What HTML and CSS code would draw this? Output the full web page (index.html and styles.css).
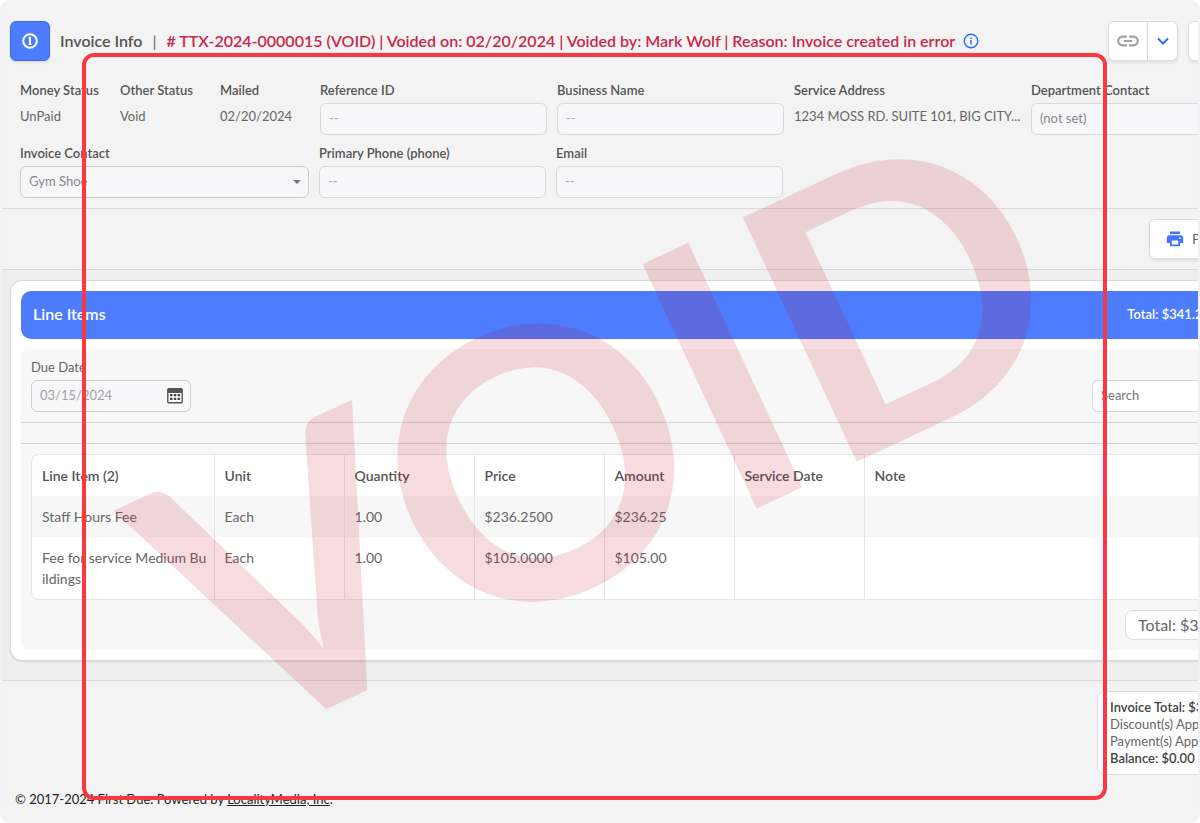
FILE: index.html
```html
<!DOCTYPE html>
<html lang="en">
<head>
  <meta charset="UTF-8" />
  <meta name="viewport" content="width=device-width, initial-scale=1.0"/>
  <title>Invoice Info</title>
  <link rel="stylesheet" href="styles.css">
</head>
<body>

  <div class="page">
    <div class="app">

      <header class="topbar">
        <div class="topbar-icon">
          <svg width="18" height="18" viewBox="0 0 18 18" fill="none" stroke="#fff">
            <circle cx="9" cy="9" r="6.8" stroke-width="2"/>
            <path d="M9 5v8" stroke-width="2"/>
            <path d="M7.400 5.800h2M7.400 12.500h3.200" stroke-width="1"/>
          </svg>
        </div>
        <h1>Invoice Info</h1>
        <span class="divider">|</span>
        <p class="void-info"># TTX-2024-0000015 (VOID) | Voided on: 02/20/2024 | Voided by: Mark Wolf | Reason: Invoice created in error</p>
        <svg class="info" width="16" height="16" viewBox="0 0 16 16" fill="none" stroke="#2f6bff">
          <circle cx="8" cy="8" r="6.8" stroke-width="1.4"/>
          <path d="M8 7v4.4M8 4.4v1.6" stroke-width="1.5"/>
        </svg>
        <div class="topbar-actions">
          <div class="btn-group">
            <button type="button" class="btn btn-link" aria-label="Copy link">
              <svg width="26" height="26" viewBox="0 0 24 24" fill="#a3a3a3">
                <path d="M3.9 12c0-1.71 1.39-3.1 3.1-3.1h4V7H7c-2.76 0-5 2.24-5 5s2.24 5 5 5h4v-1.9H7c-1.71 0-3.1-1.39-3.1-3.1zM8 13h8v-2H8v2zm9-6h-4v1.9h4c1.71 0 3.1 1.39 3.1 3.1s-1.39 3.1-3.1 3.1h-4V17h4c2.76 0 5-2.24 5-5s-2.24-5-5-5z"/>
              </svg>
            </button>
            <button type="button" class="btn btn-caret" aria-label="More link options">
              <svg width="12" height="12" viewBox="0 0 12 12" fill="none" stroke="#2f6bff" stroke-width="2">
                <path d="M1 3.5l5 5 5-5"/>
              </svg>
            </button>
          </div>
          <button type="button" class="btn btn-more" aria-label="More"></button>
        </div>
      </header>

      <section class="details">
        <div class="fields">
          <div class="field small">
            <span class="label">Money Status</span>
            <span class="value">UnPaid</span>
          </div>
          <div class="field small">
            <span class="label">Other Status</span>
            <span class="value">Void</span>
          </div>
          <div class="field small">
            <span class="label">Mailed</span>
            <span class="value">02/20/2024</span>
          </div>
          <div class="field">
            <label for="reference">Reference ID</label>
            <input type="text" id="reference" placeholder="--" />
          </div>
          <div class="field">
            <label for="business">Business Name</label>
            <input type="text" id="business" placeholder="--" />
          </div>
          <div class="field">
            <span class="label">Service Address</span>
            <span class="value">1234 MOSS RD. SUITE 101, BIG CITY...</span>
          </div>
          <div class="field">
            <label for="department">Department Contact</label>
            <input type="text" id="department" value="(not set)" />
          </div>
        </div>

        <div class="fields">
          <div class="field wide">
            <label for="contact">Invoice Contact</label>
            <div class="select">
              <select id="contact">
                <option>Gym Shoe</option>
              </select>
            </div>
          </div>
          <div class="field">
            <label for="phone">Primary Phone (phone)</label>
            <input type="text" id="phone" placeholder="--" />
          </div>
          <div class="field">
            <label for="email">Email</label>
            <input type="text" id="email" placeholder="--" />
          </div>
        </div>
      </section>

      <section class="print-bar">
        <button type="button" class="btn btn-print">
          <svg width="18" height="18" viewBox="0 0 18 18" fill="#3f74ff">
            <rect x="4" y="1.5" width="10" height="2.6"/>
            <path d="M3.5 5.2h11A2.7 2.7 0 0 1 17.200 7.900V13H14v3.200H4V13H.8V7.900A2.700 2.700 0 0 1 3.500 5.200zM5.800 10.500v4h6.400v-4zM13.300 7.300v1.500h1.500V7.300z" fill-rule="evenodd"/>
          </svg>
          Print
        </button>
      </section>

      <main class="content">
        <div class="card">
          <div class="card-header">
            <h2>Line Items</h2>
            <span>Total: $341.25</span>
          </div>

          <div class="panel">
            <div class="toolbar">
              <div class="due-date">
                <label for="due">Due Date</label>
                <div class="date-box">
                  <input type="text" id="due" value="03/15/2024" />
                  <svg width="16" height="16" viewBox="0 0 16 16">
                    <rect x=".8" y=".8" width="14.4" height="14" rx="1" fill="#fff" stroke="#555" stroke-width="1.4"/>
                    <path d="M1 1h14v4H1z" fill="#555"/>
                    <path d="M3 6h2.500v2.200H3zM6.800 6h2.500v2.200H6.800zM10.600 6h2.500v2.200h-2.500zM3 9.800h2.500V12H3zM6.800 9.800h2.500V12H6.800zM10.600 9.800h2.500V12h-2.500z" fill="#444"/>
                  </svg>
                </div>
              </div>
              <input type="search" class="search" placeholder="Search" aria-label="Search" />
            </div>

            <div class="spacer"></div>

            <div class="table-wrap">
              <table>
                <thead>
                  <tr>
                    <th class="col-item">Line Item (2)</th>
                    <th class="col">Unit</th>
                    <th class="col">Quantity</th>
                    <th class="col">Price</th>
                    <th class="col">Amount</th>
                    <th class="col">Service Date</th>
                    <th>Note</th>
                  </tr>
                </thead>
                <tbody>
                  <tr>
                    <td>Staff Hours Fee</td>
                    <td>Each</td>
                    <td>1.00</td>
                    <td>$236.2500</td>
                    <td>$236.25</td>
                    <td></td>
                    <td></td>
                  </tr>
                  <tr>
                    <td>Fee for service Medium Buildings</td>
                    <td>Each</td>
                    <td>1.00</td>
                    <td>$105.0000</td>
                    <td>$105.00</td>
                    <td></td>
                    <td></td>
                  </tr>
                </tbody>
              </table>
            </div>

            <div class="total-pill">Total: $341.25</div>
          </div>
        </div>
      </main>

      <section class="summary">
        <div class="summary-box">
          <strong>Invoice Total: $341.25</strong>
          <span>Discount(s) Applied: $0.00</span>
          <span>Payment(s) Applied: $0.00</span>
          <strong>Balance: $0.00</strong>
        </div>
      </section>

      <footer>© 2017-2024 First Due. Powered by <a href="#">LocalityMedia, Inc</a>.</footer>
    </div>

    <div class="watermark"><span>VOID</span></div>
    <div class="highlight"></div>
  </div>

</body>
</html>
```
FILE: styles.css
```css
* {
  box-sizing: border-box;
}

body {
  margin: 0;
  background: #fff;
  font-family: Lato, sans-serif;
  font-size: 14px;
  line-height: 20px;
  color: #666;
}

h1, h2, p {
  margin: 0;
}

.page {
  position: relative;
  min-height: 100vh;
  padding: 0 2px;
  overflow: hidden;
  border-radius: 10px;
  background: linear-gradient(to right, #f2f1f8 2px, #f3f3f3 2px, #f3f3f3 calc(100% - 2px), #f2f1f8 calc(100% - 2px));
}

/* content is wider than the frame and gets cut at the right edge */
.app {
  overflow: hidden;
}

.app > * {
  width: calc(100% + 40px);
}

/* buttons and inputs */

.btn {
  display: flex;
  align-items: center;
  justify-content: center;
  height: 40px;
  padding: 0;
  border: 1px solid #ddd;
  border-radius: 6px;
  background: #fff;
  box-shadow: 0 2px 3px rgba(0, 0, 0, 0.08);
  font: inherit;
  color: #666;
  cursor: pointer;
}

input, select {
  width: 100%;
  height: 32px;
  padding: 0 8px 2px;
  border: 1px solid #d9d9d9;
  border-radius: 6px;
  background: #f7f7fa;
  font: inherit;
  font-size: 13px;
  color: #888;
}

input::placeholder {
  color: #aaa;
}

/* header */

.topbar {
  display: flex;
  align-items: center;
  padding: 21px 10px 0 8px;
  font-size: 16px;
  white-space: nowrap;
}

.topbar-icon {
  display: flex;
  align-items: center;
  justify-content: center;
  width: 40px;
  height: 40px;
  border: 1px solid #3a6ae6;
  border-radius: 6px;
  background: #4d7cff;
  box-shadow: 0 2px 3px rgba(0, 0, 0, 0.08);
}

.topbar h1 {
  margin-left: 10px;
  font-size: 16px;
  font-weight: 600;
  color: #555;
}

.divider {
  margin: 0 10px;
}

.void-info {
  font-weight: 600;
  color: #c8294a;
}

.info {
  margin-left: 8px;
}

.topbar-actions {
  display: flex;
  gap: 10px;
  margin-left: auto;
}

.btn-group {
  display: flex;
}

.btn-link {
  width: 40px;
  border-radius: 6px 0 0 6px;
}

.btn-caret {
  width: 30px;
  border-left: 0;
  border-radius: 0 6px 6px 0;
}

.btn-more {
  width: 40px;
}

/* invoice details */

.details {
  padding: 19px 10px 10px 18px;
  border-bottom: 1px solid #d9d9d9;
}

.fields {
  display: flex;
  gap: 10px;
}

.fields + .fields {
  margin-top: 8px;
}

.field {
  display: flex;
  flex-direction: column;
  flex: none;
  width: 227px;
  gap: 3px;
}

.field.small {
  width: 90px;
}

.field.wide {
  width: 289px;
}

.field label, .label {
  font-size: 13px;
  font-weight: 600;
  color: #555;
}

.value {
  padding-top: 3px;
  font-size: 13px;
  white-space: nowrap;
}

.select {
  position: relative;
}

.select select {
  appearance: none;
  display: block;
  border-color: #ccc;
}

.select::after {
  content: "";
  position: absolute;
  top: 14px;
  right: 8px;
  border: 4px solid transparent;
  border-top-color: #777;
  border-bottom: 0;
}

.print-bar {
  display: flex;
  justify-content: flex-end;
  padding: 10px;
  border-bottom: 1px solid #d9d9d9;
}

.btn-print {
  justify-content: flex-start;
  gap: 8px;
  width: 79px;
  padding-left: 16px;
}

/* line items */

.content {
  padding: 10px 8px 19px;
  border-bottom: 1px solid #d9d9d9;
  background: #efefef;
}

.card {
  padding: 10px;
  border: 1px solid #d9d9d9;
  border-radius: 12px;
  background: #fff;
  box-shadow: 0 1px 2px rgba(0, 0, 0, 0.1);
}

.card-header {
  display: flex;
  align-items: center;
  justify-content: space-between;
  height: 48px;
  padding: 0 9px 2px 12px;
  border-radius: 10px;
  background: #4d7cff;
  font-size: 13px;
  font-weight: 600;
  color: #fff;
}

.card-header h2 {
  font-size: 16px;
  font-weight: 600;
}

.panel {
  margin-top: 10px;
  padding-bottom: 10px;
  border-radius: 8px;
  background: #f7f7f7;
}

.toolbar {
  display: flex;
  align-items: flex-end;
  justify-content: space-between;
  padding: 8px 10px 10px;
}

.due-date {
  width: 160px;
}

.due-date label {
  display: block;
  margin-bottom: 3px;
  font-size: 13px;
}

.date-box {
  position: relative;
}

.date-box input {
  display: block;
  border-color: #ccc;
  color: #a3a3a3;
}

.date-box svg {
  position: absolute;
  top: 8px;
  right: 8px;
}

.toolbar .search {
  width: 117px;
  background: #fff;
}

.search::placeholder {
  color: #777;
}

.spacer {
  height: 22px;
  border-top: 1px solid #d4d4d4;
  border-bottom: 1px solid #d4d4d4;
}

.table-wrap {
  margin: 10px;
  overflow: hidden;
  border: 1px solid #e6e6e6;
  border-radius: 8px;
  background: #fff;
}

table {
  width: 100%;
  table-layout: fixed;
  border-collapse: collapse;
  line-height: 21px;
}

th, td {
  padding: 10px 6px 10px 10px;
  border-left: 1px solid #e6e6e6;
  text-align: left;
  vertical-align: top;
  word-break: break-all;
}

th:first-child, td:first-child {
  border-left: 0;
}

th {
  font-weight: 600;
  color: #555;
}

tbody tr:first-child {
  background: #f7f7f7;
}

.col-item {
  width: 182px;
}

.col {
  width: 130px;
}

.total-pill {
  width: 84px;
  height: 30px;
  margin: 0 10px 0 auto;
  padding: 0 12px;
  border: 1px solid #ddd;
  border-radius: 8px;
  background: #fff;
  font-size: 16px;
  line-height: 28px;
  white-space: nowrap;
}

/* totals and footer */

.summary {
  display: flex;
  justify-content: flex-end;
  padding: 10px 0;
}

.summary-box {
  display: flex;
  flex-direction: column;
  width: 141px;
  padding: 7px 12px;
  border: 1px solid #ddd;
  border-radius: 8px;
  background: #fff;
  font-size: 13px;
  line-height: 17px;
  white-space: nowrap;
}

.summary-box strong {
  font-weight: 600;
  color: #444;
}

footer {
  padding: 4px 13px 14px;
  font-size: 13px;
  color: #222;
}

footer a {
  color: inherit;
}

/* overlays */

.watermark {
  position: absolute;
  inset: 24px 6px 0 0;
  display: flex;
  align-items: center;
  justify-content: center;
  pointer-events: none;
}

.watermark span {
  font-size: 373px;
  font-weight: 700;
  line-height: 1;
  color: rgba(195, 15, 42, 0.15);
  transform: rotate(-25deg);
}

.highlight {
  position: absolute;
  inset: 53px 93px 23px 82px;
  border: 4px solid #f93842;
  border-radius: 12px;
  pointer-events: none;
}
```
